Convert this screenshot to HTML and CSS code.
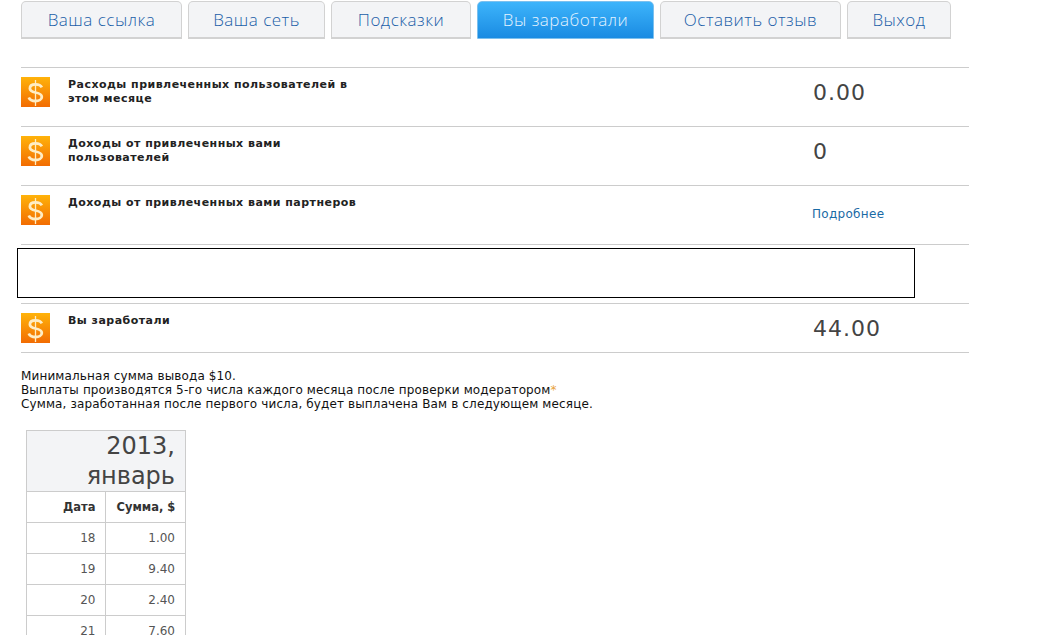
FILE: index.html
```html
<!DOCTYPE html>
<html lang="ru">
<head>
<meta charset="utf-8">
<title>Вы заработали</title>
<link rel="stylesheet" href="styles.css">
</head>
<body>
<svg class="defs" width="0" height="0" aria-hidden="true">
  <defs>
    <linearGradient id="dollar-bg" x1="0" y1="0" x2="0" y2="1">
      <stop offset="0" stop-color="#ffb30a"/>
      <stop offset="1" stop-color="#f26c02"/>
    </linearGradient>
    <symbol id="dollar" viewBox="0 0 29 30">
      <rect width="29" height="30" fill="url(#dollar-bg)"/>
      <path d="M20.8 10.4C19.8 8.2 17.6 7.4 14.5 7.4C11.2 7.4 8.9 8.9 8.9 11.4C8.9 14 11.4 14.8 14.5 15.5C18 16.2 20.8 17.2 20.8 19.9C20.8 22.5 18 24 14.5 24C11.2 24 8.8 22.9 7.8 20.4" fill="none" stroke="#ffedc4" stroke-width="2.8"/>
      <path d="M14.5 3V29" fill="none" stroke="#ffedc4" stroke-width="1.3"/>
    </symbol>
  </defs>
</svg>
<nav class="tabs">
  <a class="tab tab-1">Ваша ссылка</a>
  <a class="tab tab-2">Ваша сеть</a>
  <a class="tab tab-3">Подсказки</a>
  <a class="tab tab-4 active">Вы заработали</a>
  <a class="tab tab-5">Оставить отзыв</a>
  <a class="tab tab-6">Выход</a>
</nav>
<section class="stats">
  <div class="row">
    <svg class="icon"><use href="#dollar"/></svg>
    <div class="label">Расходы привлеченных пользователей в этом месяце</div>
    <div class="value">0.00</div>
  </div>
  <div class="row">
    <svg class="icon"><use href="#dollar"/></svg>
    <div class="label">Доходы от привлеченных вами пользователей</div>
    <div class="value">0</div>
  </div>
  <div class="row">
    <svg class="icon"><use href="#dollar"/></svg>
    <div class="label wide">Доходы от привлеченных вами партнеров</div>
    <a class="more">Подробнее</a>
  </div>
  <div class="row banner-row">
    <div class="banner"></div>
  </div>
  <div class="row last">
    <svg class="icon"><use href="#dollar"/></svg>
    <div class="label">Вы заработали</div>
    <div class="value">44.00</div>
  </div>
</section>
<p class="notes">Минимальная сумма вывода $10.<br>
Выплаты производятся 5-го числа каждого месяца после проверки модератором<span class="star">*</span><br>
Сумма, заработанная после первого числа, будет выплачена Вам в следующем месяце.</p>
<table class="history">
  <thead>
    <tr><th class="month" colspan="2">2013, январь</th></tr>
    <tr><th>Дата</th><th>Сумма, $</th></tr>
  </thead>
  <tbody>
    <tr><td>18</td><td>1.00</td></tr>
    <tr><td>19</td><td>9.40</td></tr>
    <tr><td>20</td><td>2.40</td></tr>
    <tr><td>21</td><td>7.60</td></tr>
  </tbody>
</table>
</body>
</html>
```

FILE: styles.css
```css
html, body {
  margin: 0;
  padding: 0;
  height: 635px;
  overflow: hidden;
  background: #fff;
}
body {
  font-family: "DejaVu Sans", Verdana, sans-serif;
  font-size: 11px;
  color: #222;
}
.defs { position: absolute; }
.tabs {
  display: flex;
  gap: 6px;
  margin: 1px 0 0 21px;
}
.tab {
  box-sizing: border-box;
  height: 38px;
  line-height: 35px;
  text-align: center;
  font-family: "Open Sans", sans-serif;
  font-weight: 300;
  font-size: 17px;
  letter-spacing: 0.5px;
  color: #1a5ea8;
  background: #f3f4f6;
  border: 1px solid #d2d2d2;
  border-bottom-width: 2px;
  border-radius: 5px 5px 0 0;
}
.tab-1 { width: 161px; }
.tab-2 { width: 137px; }
.tab-3 { width: 140px; }
.tab-4 { width: 177px; }
.tab-5 { width: 181px; }
.tab-6 { width: 104px; }
.tab.active {
  color: #e4f3ff;
  background: linear-gradient(#3db4fb, #1a8be2);
  border-color: #7cc0ee;
  border-bottom-width: 1px;
}
.stats {
  width: 948px;
  margin: 28px 0 0 21px;
  border-bottom: 1px solid #ccc;
}
.row {
  box-sizing: border-box;
  height: 59px;
  border-top: 1px solid #ccc;
  display: flex;
  padding-top: 9px;
}
.row.last { height: 49px; }
.icon {
  flex: none;
  width: 29px;
  height: 30px;
}
.label {
  width: 300px;
  margin: 1px 0 0 18px;
  font-weight: bold;
  font-size: 11px;
  line-height: 14px;
  letter-spacing: 0.47px;
}
.label.wide { width: 724px; }
.value {
  margin-left: 445px;
  font-size: 22px;
  line-height: 30px;
  letter-spacing: 1px;
  margin-top: 1px;
  color: #444;
}
.more {
  margin-top: 12px;
  margin-left: 20px;
  font-size: 12px;
  line-height: 14px;
  letter-spacing: 0.3px;
  color: #1a6aa5;
}
.row.banner-row { padding-top: 3px; }
.banner {
  box-sizing: border-box;
  width: 898px;
  height: 50px;
  margin-left: -4px;
  background: #fff;
  border: 1px solid #000;
}
.notes {
  margin: 16px 0 0 21px;
  font-size: 12px;
  line-height: 14px;
  letter-spacing: 0.13px;
  color: #111;
}
.star { color: #e8a33c; }
.history {
  margin: 19px 0 0 26px;
  width: 160px;
  border-collapse: collapse;
  table-layout: fixed;
}
.history th, .history td {
  box-sizing: border-box;
  height: 31px;
  border: 1px solid #ccc;
  padding: 0 10px;
  text-align: right;
  font-size: 12px;
  white-space: nowrap;
}
.history td { color: #555; }
.history th { color: #333; font-size: 11.5px; }
.history th.month {
  height: 61px;
  padding: 1px 10px 0;
  background: #f3f4f6;
  font-size: 24px;
  font-weight: normal;
  line-height: 29.5px;
  color: #444;
  white-space: normal;
}
.history th:first-child, .history td:first-child { width: 79px; }
```
